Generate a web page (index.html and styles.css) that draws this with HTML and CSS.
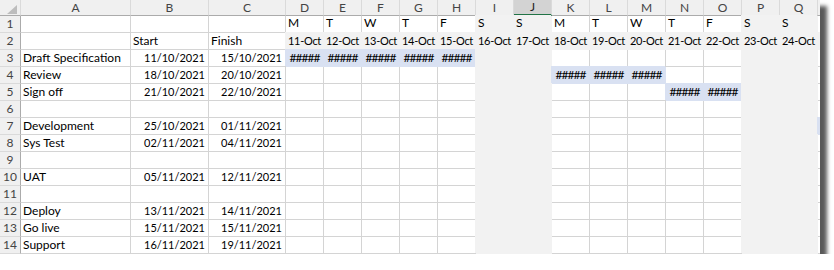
FILE: index.html
```html
<!DOCTYPE html>
<html lang="en">
<head>
  <meta charset="UTF-8">
  <title>Project Plan</title>
  <link rel="stylesheet" href="styles.css">
</head>
<body>

  <div class="sheet">
    <table class="grid">
      <thead>
        <tr>
          <th class="corner">
            <svg width="20" height="15" viewBox="0 0 20 15"><polygon points="7,14 17,14 17,5" fill="#bdbdbd"/></svg>
          </th>
          <th class="col-a">A</th>
          <th class="col-b">B</th>
          <th class="col-c">C</th>
          <th class="col-day">D</th>
          <th class="col-day">E</th>
          <th class="col-day">F</th>
          <th class="col-day">G</th>
          <th class="col-day">H</th>
          <th class="col-day">I</th>
          <th class="col-day active">J</th>
          <th class="col-day">K</th>
          <th class="col-day">L</th>
          <th class="col-day">M</th>
          <th class="col-day">N</th>
          <th class="col-day">O</th>
          <th class="col-day">P</th>
          <th class="col-day">Q</th>
          <th class="col-day"></th>
        </tr>
      </thead>
      <tbody>
        <tr>
          <th>1</th><td></td><td></td><td></td>
          <td class="day">M</td><td class="day">T</td><td class="day">W</td><td class="day">T</td><td class="day">F</td>
          <td class="day we">S</td><td class="day we">S</td>
          <td class="day">M</td><td class="day">T</td><td class="day">W</td><td class="day">T</td><td class="day">F</td>
          <td class="day we">S</td><td class="day we">S</td>
          <td></td>
        </tr>
        <tr>
          <th>2</th><td></td><td>Start</td><td>Finish</td>
          <td class="dt">11-Oct</td><td class="dt">12-Oct</td><td class="dt">13-Oct</td><td class="dt">14-Oct</td><td class="dt">15-Oct</td>
          <td class="dt">16-Oct</td><td class="dt">17-Oct</td>
          <td class="dt">18-Oct</td><td class="dt">19-Oct</td><td class="dt">20-Oct</td><td class="dt">21-Oct</td><td class="dt">22-Oct</td>
          <td class="dt">23-Oct</td><td class="dt">24-Oct</td>
          <td class="dt"></td>
        </tr>
        <tr>
          <th>3</th><td>Draft Specification</td><td class="num">11/10/2021</td><td class="num">15/10/2021</td>
          <td class="bar">#####</td><td class="bar">#####</td><td class="bar">#####</td><td class="bar">#####</td><td class="bar">#####</td>
          <td class="we"></td><td class="we"></td>
          <td></td><td></td><td></td><td></td><td></td>
          <td class="we"></td><td class="we"></td>
          <td></td>
        </tr>
        <tr>
          <th>4</th><td>Review</td><td class="num">18/10/2021</td><td class="num">20/10/2021</td>
          <td></td><td></td><td></td><td></td><td></td>
          <td class="we"></td><td class="we"></td>
          <td class="bar">#####</td><td class="bar">#####</td><td class="bar">#####</td><td></td><td></td>
          <td class="we"></td><td class="we"></td>
          <td></td>
        </tr>
        <tr>
          <th>5</th><td>Sign off</td><td class="num">21/10/2021</td><td class="num">22/10/2021</td>
          <td></td><td></td><td></td><td></td><td></td>
          <td class="we"></td><td class="we"></td>
          <td></td><td></td><td></td><td class="bar">#####</td><td class="bar">#####</td>
          <td class="we"></td><td class="we"></td>
          <td></td>
        </tr>
        <tr>
          <th>6</th><td></td><td></td><td></td>
          <td></td><td></td><td></td><td></td><td></td>
          <td class="we"></td><td class="we"></td>
          <td></td><td></td><td></td><td></td><td></td>
          <td class="we"></td><td class="we"></td>
          <td></td>
        </tr>
        <tr>
          <th>7</th><td>Development</td><td class="num">25/10/2021</td><td class="num">01/11/2021</td>
          <td></td><td></td><td></td><td></td><td></td>
          <td class="we"></td><td class="we"></td>
          <td></td><td></td><td></td><td></td><td></td>
          <td class="we"></td><td class="we"></td>
          <td class="bar"></td>
        </tr>
        <tr>
          <th>8</th><td>Sys Test</td><td class="num">02/11/2021</td><td class="num">04/11/2021</td>
          <td></td><td></td><td></td><td></td><td></td>
          <td class="we"></td><td class="we"></td>
          <td></td><td></td><td></td><td></td><td></td>
          <td class="we"></td><td class="we"></td>
          <td></td>
        </tr>
        <tr>
          <th>9</th><td></td><td></td><td></td>
          <td></td><td></td><td></td><td></td><td></td>
          <td class="we"></td><td class="we"></td>
          <td></td><td></td><td></td><td></td><td></td>
          <td class="we"></td><td class="we"></td>
          <td></td>
        </tr>
        <tr>
          <th>10</th><td>UAT</td><td class="num">05/11/2021</td><td class="num">12/11/2021</td>
          <td></td><td></td><td></td><td></td><td></td>
          <td class="we"></td><td class="we"></td>
          <td></td><td></td><td></td><td></td><td></td>
          <td class="we"></td><td class="we"></td>
          <td></td>
        </tr>
        <tr>
          <th>11</th><td></td><td></td><td></td>
          <td></td><td></td><td></td><td></td><td></td>
          <td class="we"></td><td class="we"></td>
          <td></td><td></td><td></td><td></td><td></td>
          <td class="we"></td><td class="we"></td>
          <td></td>
        </tr>
        <tr>
          <th>12</th><td>Deploy</td><td class="num">13/11/2021</td><td class="num">14/11/2021</td>
          <td></td><td></td><td></td><td></td><td></td>
          <td class="we"></td><td class="we"></td>
          <td></td><td></td><td></td><td></td><td></td>
          <td class="we"></td><td class="we"></td>
          <td></td>
        </tr>
        <tr>
          <th>13</th><td>Go live</td><td class="num">15/11/2021</td><td class="num">15/11/2021</td>
          <td></td><td></td><td></td><td></td><td></td>
          <td class="we"></td><td class="we"></td>
          <td></td><td></td><td></td><td></td><td></td>
          <td class="we"></td><td class="we"></td>
          <td></td>
        </tr>
        <tr>
          <th>14</th><td>Support</td><td class="num">16/11/2021</td><td class="num">19/11/2021</td>
          <td></td><td></td><td></td><td></td><td></td>
          <td class="we"></td><td class="we"></td>
          <td></td><td></td><td></td><td></td><td></td>
          <td class="we"></td><td class="we"></td>
          <td></td>
        </tr>
      </tbody>
    </table>
  </div>

</body>
</html>
```

FILE: styles.css
```css
body {
  margin: 0;
  background: #fff;
  font-family: Lato, "Liberation Sans", sans-serif;
}

.sheet {
  width: 820px;
  height: 254px;
  overflow: hidden;
  background: #fff;
  box-shadow: 7px 6px 4px rgba(0,0,0,0.65);
}

.grid {
  table-layout: fixed;
  width: 856px;
  border-collapse: separate;
  border-spacing: 0;
  font-size: 12px;
  color: #000;
}

.grid th,
.grid td {
  box-sizing: border-box;
  padding: 0 2px;
  height: 17px;
  line-height: 16px;
  white-space: nowrap;
  overflow: hidden;
  border-right: 1px solid #d4d4d4;
  border-bottom: 1px solid #d4d4d4;
  vertical-align: bottom;
  text-align: left;
}

/* column headers */
.grid thead th {
  height: 16px;
  line-height: 15px;
  background: #f0f0f0;
  color: #444;
  font-weight: 400;
  text-align: center;
  border-right-color: #dadada;
  border-bottom-color: #ababab;
}

.grid thead th.active {
  background: #d3d3d3;
  color: #222;
  border-bottom: 2px solid #217346;
  line-height: 14px;
}

.corner { width: 21px; padding: 0 !important; vertical-align: top !important; }
.corner svg { display: block; }
.col-a { width: 110px; }
.col-b { width: 78px; }
.col-c { width: 77px; }
.col-day { width: 38px; }

/* row numbers */
.grid tbody th {
  background: #f0f0f0;
  color: #444;
  font-weight: 400;
  text-align: center;
  padding: 0;
  border-right-color: #ababab;
  border-bottom-color: #dadada;
}

.num {
  text-align: right !important;
  padding-right: 3px !important;
  font-size: 11px;
}

.day {
  vertical-align: top !important;
  line-height: 14px !important;
}

.dt {
  text-align: center !important;
  font-size: 11px;
  letter-spacing: -0.3px;
}

/* filled cells hide the gridlines round them */
.dt,
.we {
  background: #f2f2f2;
  border-color: #f2f2f2 !important;
  box-shadow: -1px -1px 0 #f2f2f2;
}

.bar {
  background: #d9e1f2;
  border-color: #d9e1f2 !important;
  box-shadow: -1px -1px 0 #d9e1f2;
  text-align: center !important;
  font-size: 12px;
  letter-spacing: -1px;
}
```
